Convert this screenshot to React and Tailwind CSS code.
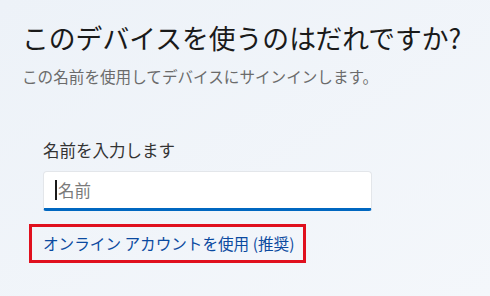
export default function App() {
  return (
    <div
      className="w-[490px] h-[296px] overflow-hidden bg-gradient-to-br from-[#edf2f8] to-[#f4f7fb] pl-[22px] pt-[18px]"
      style={{ fontFamily: '"Noto Sans CJK JP", "Noto Sans", sans-serif' }}
    >
      <h1 className="text-[26.8px] leading-[40px] text-[#1a1a1a] font-normal whitespace-nowrap">
        このデバイスを使うのはだれですか?
      </h1>
      <p className="mt-[8px] text-[15.6px] leading-[20px] text-[#6b6b6b] whitespace-nowrap">
        この名前を使用してデバイスにサインインします。
      </p>
      <div className="mt-[53px] pl-[21px]">
        <div className="text-[16.5px] leading-[22px] text-[#333333]">名前を入力します</div>
        <div className="mt-[10px] w-[329px] h-[40px] bg-white rounded-t-[4px] rounded-b-[3px] border border-[#e3e6ea] border-b-[3px] border-b-[#0067c0] flex items-center pl-[11px]">
          <span className="w-[2px] h-[20px] bg-[#1a1a1a]"></span>
          <span className="ml-[1px] text-[16.5px] text-[#7a7a7a]">名前</span>
        </div>
      </div>
      <div className="mt-[13px] ml-[7px] w-[277px] h-[39px] border-[3px] border-[#e0101e] flex items-center pl-[11px]">
        <span className="text-[15.6px] text-[#0b4aa0] whitespace-nowrap">オンライン アカウントを使用 (推奨)</span>
      </div>
    </div>
  );
}
